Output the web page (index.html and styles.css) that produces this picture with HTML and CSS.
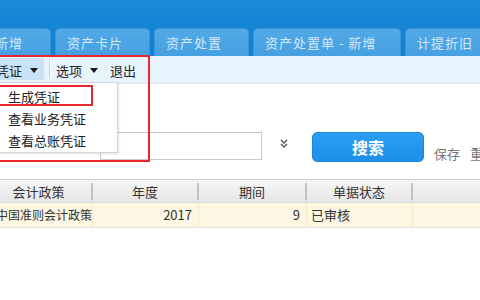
FILE: index.html
```html
<!DOCTYPE html>
<html lang="zh-CN">
<head>
<meta charset="utf-8">
<link rel="stylesheet" href="styles.css">
</head>
<body>
<div class="app">
  <header class="topbar"></header>
  <nav class="tabs">
    <div class="tab t1">新增</div>
    <div class="tab t2">资产卡片</div>
    <div class="tab t3">资产处置</div>
    <div class="tab t4">资产处置单 - 新增</div>
    <div class="tab t5">计提折旧</div>
  </nav>
  <div class="toolbar">
    <div class="tbtn active">凭证<i class="caret"></i></div>
    <span class="sep"></span>
    <div class="tbtn">选项<i class="caret"></i></div>
    <div class="tbtn">退出</div>
  </div>
  <div class="search">
    <div class="input"></div>
    <svg class="chev" width="8" height="9" viewBox="0 0 8 9"><path d="M1 1 L4 4 L7 1 M1 5 L4 8 L7 5" fill="none" stroke="#555" stroke-width="1.4"/></svg>
    <button class="btn">搜索</button>
    <div class="links"><span>保存</span><span>重置</span></div>
  </div>
  <div class="grid head">
    <div class="hc">会计政策</div>
    <div class="hc">年度</div>
    <div class="hc">期间</div>
    <div class="hc">单据状态</div>
    <div class="hc last"></div>
  </div>
  <div class="grid row">
    <div class="dc left">中国准则会计政策</div>
    <div class="dc num">2017</div>
    <div class="dc num">9</div>
    <div class="dc status">已审核</div>
    <div class="dc last"></div>
  </div>
  <div class="dropdown">
    <div class="item">生成凭证</div>
    <div class="item">查看业务凭证</div>
    <div class="item">查看总账凭证</div>
  </div>
  <div class="mark mark-item"></div>
  <div class="mark mark-big"></div>
</div>
</body>
</html>
```

FILE: styles.css
```css
html, body {
  margin: 0;
  padding: 0;
  background: #fff;
}
body {
  width: 480px;
  height: 300px;
  overflow: hidden;
  font-family: "Noto Sans CJK SC", "Liberation Sans", sans-serif;
  color: #333;
}
.app {
  position: relative;
  width: 480px;
  height: 300px;
  overflow: hidden;
  background: #fff;
}
.topbar {
  height: 28px;
  background: linear-gradient(#1b8ad9, #1484d4);
}
.tabs {
  display: flex;
  gap: 4px;
  height: 28px;
  margin-left: -17px;
  background: #1482d3;
}
.tab {
  box-sizing: border-box;
  height: 28px;
  padding-left: 11px;
  line-height: 28px;
  font-size: 13px;
  letter-spacing: 1px;
  color: #d3e9fa;
  background: linear-gradient(#52a9e6, #46a0e1);
  border: 1px solid #3b96d9;
  border-bottom: none;
  border-radius: 5px 5px 0 0;
  white-space: nowrap;
  flex: none;
}
.t1 { width: 68px; }
.t2 { width: 95px; }
.t3 { width: 95px; }
.t4 { width: 148px; }
.t5 { width: 95px; }

.toolbar {
  display: flex;
  align-items: flex-start;
  box-sizing: border-box;
  height: 28px;
  padding-top: 2px;
  margin-left: -10px;
  background: #e7f3fd;
  border-bottom: 1px solid #dceaf6;
}
.tbtn {
  display: flex;
  align-items: center;
  flex: none;
  box-sizing: border-box;
  height: 22px;
  padding: 2px 6px 0;
  font-size: 13px;
  color: #222;
  white-space: nowrap;
}
.tbtn.active {
  background: #c9e2f6;
}
.caret {
  display: inline-block;
  width: 0;
  height: 0;
  margin-left: 8px;
  border-left: 4px solid transparent;
  border-right: 4px solid transparent;
  border-top: 5px solid #1a1a1a;
}
.sep {
  flex: none;
  width: 1px;
  height: 18px;
  margin: 2px 0 0 5px;
  background: #bcd2e5;
  box-shadow: 1px 0 0 #fff;
}

.search {
  display: flex;
  align-items: flex-start;
  height: 30px;
  margin-top: 48px;
}
.search > * {
  flex: none;
}
.input {
  box-sizing: border-box;
  width: 162px;
  height: 28px;
  margin-left: 100px;
  border: 1px solid #c8c8c8;
  background: #fff;
}
.chev {
  margin: 7px 0 0 18px;
}
.btn {
  box-sizing: border-box;
  width: 112px;
  height: 30px;
  margin-left: 24px;
  border: 1px solid #1c86dc;
  border-radius: 5px;
  background: linear-gradient(#2a9df2, #1f8fe8);
  color: #fff;
  font-family: inherit;
  font-size: 16px;
  font-weight: bold;
  padding: 0;
  line-height: 28px;
}
.links {
  display: flex;
  gap: 10px;
  margin: 14px 0 0 10px;
  font-size: 13px;
  line-height: 16px;
  color: #777;
  white-space: nowrap;
}

.grid {
  display: grid;
  grid-template-columns: 107px 106px 108px 106px 1fr;
  width: 494px;
  margin-left: -14px;
}
.head {
  margin-top: 17px;
  box-sizing: border-box;
  height: 24px;
  align-items: center;
  border-top: 1px solid #cfcfcf;
  border-bottom: 1px solid #d8d8d8;
  background: linear-gradient(#f6f6f6, #e6e6e6);
}
.hc {
  box-sizing: border-box;
  height: 17px;
  line-height: 17px;
  text-align: center;
  font-size: 13px;
  color: #333;
  border-right: 2px solid #c2c2c2;
}
.hc.last { border-right: none; }
.row {
  box-sizing: border-box;
  height: 25px;
  background: #fdf6e3;
  border-bottom: 1px solid #e2e2e2;
}
.dc {
  box-sizing: border-box;
  line-height: 24px;
  font-size: 12px;
  color: #333;
  border-right: 1px solid #f1e8cf;
  white-space: nowrap;
  overflow: hidden;
}
.dc.left { padding-left: 10px; }
.dc.num { text-align: right; padding-right: 6px; font-size: 13px; }
.dc.status { padding-left: 4px; font-size: 13px; }
.dc.last { border-right: none; }

.dropdown {
  position: absolute;
  left: -4px;
  top: 82px;
  box-sizing: border-box;
  width: 122px;
  height: 71px;
  padding-top: 3px;
  background: #fff;
  border: 1px solid #d6d6d6;
  box-shadow: 1px 1px 2px rgba(0, 0, 0, 0.12);
}
.item {
  height: 22px;
  line-height: 22px;
  padding-left: 11px;
  font-size: 13px;
  color: #222;
  white-space: nowrap;
}
.mark {
  position: absolute;
  box-sizing: border-box;
  border: 2px solid #e8262d;
}
.mark-item {
  left: -6px;
  top: 85px;
  width: 99px;
  height: 21px;
}
.mark-big {
  left: -6px;
  top: 55px;
  width: 156px;
  height: 107px;
}
```
